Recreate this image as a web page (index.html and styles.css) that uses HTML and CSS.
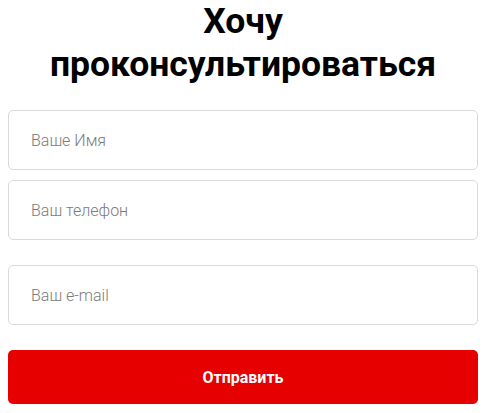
FILE: index.html
```html
<!DOCTYPE html>
<html lang="ru">
<head>
<meta charset="utf-8">
<link rel="stylesheet" href="styles.css">
</head>
<body>
<form class="form">
  <h1 class="title">Хочу проконсультироваться</h1>
  <div class="fields">
    <input class="field field-name" type="text" placeholder="Ваше Имя">
    <input class="field field-phone" type="text" placeholder="Ваш телефон">
    <input class="field field-email" type="text" placeholder="Ваш e-mail">
  </div>
  <button class="submit" type="button">Отправить</button>
</form>
</body>
</html>
```

FILE: styles.css
```css
html, body {
  margin: 0;
  padding: 0;
  background: #ffffff;
}
body {
  font-family: Roboto, "Liberation Sans", Arial, sans-serif;
}
.form {
  width: 470px;
  margin: 0 8px;
  display: flex;
  flex-direction: column;
}
.title {
  margin: 0 auto;
  width: 420px;
  text-align: center;
  font-size: 35.5px;
  line-height: 43px;
  font-weight: 700;
  color: #000;
}
.fields {
  display: flex;
  flex-direction: column;
  margin-top: 24px;
}
.field {
  box-sizing: border-box;
  width: 100%;
  height: 60px;
  border: 1px solid #dadada;
  border-radius: 5px;
  padding: 0 22px;
  font-family: Roboto, "Liberation Sans", Arial, sans-serif;
  font-size: 16px;
  font-weight: 300;
  color: #333;
  background: #fff;
  outline: none;
}
.field::placeholder {
  color: #7a7a7a;
  font-weight: 300;
}
.field-phone {
  margin-top: 10px;
}
.field-email {
  margin-top: 25px;
}
.submit {
  margin-top: 25px;
  height: 54px;
  border: 0;
  border-radius: 5px;
  background: #e60000;
  color: #fff;
  font-family: Roboto, "Liberation Sans", Arial, sans-serif;
  font-size: 16px;
  font-weight: 700;
  cursor: pointer;
}
```
